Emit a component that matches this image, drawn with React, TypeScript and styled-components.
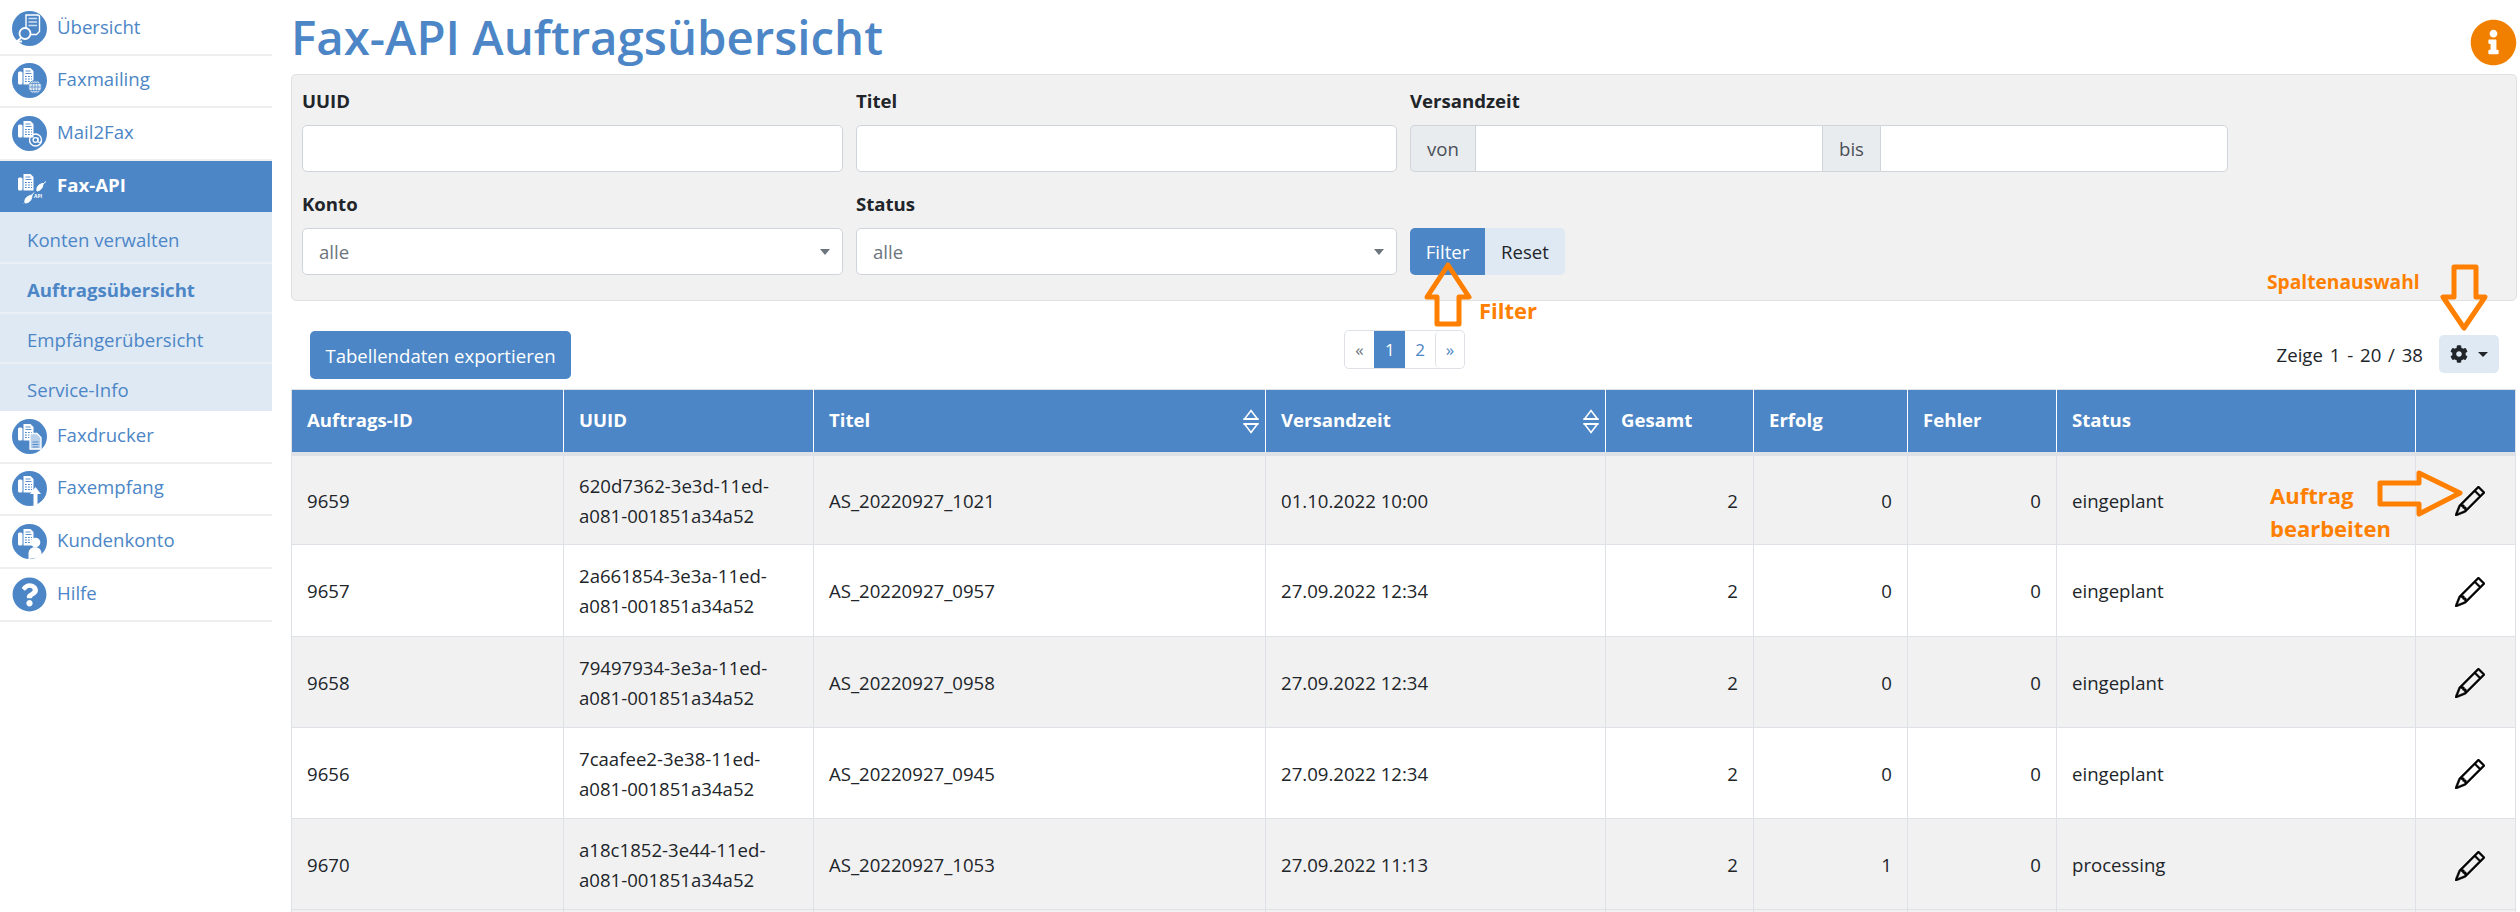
import React from 'react';
import styled, { createGlobalStyle } from 'styled-components';
import { FaCog, FaInfoCircle, FaQuestionCircle } from 'react-icons/fa';
import { BsPencil } from 'react-icons/bs';

const BLUE = '#4c86c6';
const ORANGE = '#ff8000';

const GlobalStyle = createGlobalStyle`
  html, body {
    margin: 0;
    height: 912px;
    overflow: hidden;
    background: #fff;
  }
  body {
    font-family: "Open Sans", "Noto Sans", sans-serif;
    font-size: 18.6px;
    color: #212529;
  }
  * {
    box-sizing: border-box;
  }
`;

const Page = styled.div`
  position: relative;
  display: flex;
  width: 2520px;
  height: 912px;
  overflow: hidden;
`;

const Sidebar = styled.nav`
  flex: 0 0 272px;
  padding-top: 3px;
`;

const NavItem = styled.div<{ $active?: boolean }>`
  display: flex;
  align-items: center;
  gap: 10px;
  height: ${(p) => (p.$active ? '51px' : '52.67px')};
  padding-left: 12px;
  border-bottom: ${(p) => (p.$active ? 'none' : '2px solid #eeeeee')};
  background: ${(p) => (p.$active ? BLUE : 'transparent')};
  color: ${(p) => (p.$active ? '#fff' : BLUE)};
  font-weight: ${(p) => (p.$active ? 700 : 400)};
  svg {
    flex: none;
  }
`;

const NavLabel = styled.span`
  margin-top: -4px;
`;

const SubNav = styled.div`
  padding-top: 2px;
  background: #dfe9f4;
`;

const SubItem = styled.div<{ $current?: boolean; $last?: boolean }>`
  display: flex;
  align-items: center;
  height: ${(p) => (p.$last ? '47px' : '50px')};
  padding: 4px 0 0 27px;
  border-bottom: ${(p) => (p.$last ? 'none' : '2px solid #eaeff5')};
  color: ${BLUE};
  font-weight: ${(p) => (p.$current ? 700 : 400)};
`;

const Main = styled.main`
  flex: 1;
  min-width: 0;
  padding: 0 3px 0 19px;
`;

const TitleRow = styled.header`
  display: flex;
  align-items: flex-start;
  justify-content: space-between;
  height: 74px;
`;

const Title = styled.h1`
  margin: 4px 0 0 0;
  font-size: 47.4px;
  font-weight: 600;
  line-height: 66px;
  color: ${BLUE};
`;

const InfoIcon = styled(FaInfoCircle)`
  margin-top: 19px;
  color: #f28000;
  font-size: 47px;
`;

const FilterCard = styled.section`
  display: grid;
  grid-template-columns: 541px 541px 818px;
  column-gap: 13px;
  height: 227px;
  padding: 13px 10px 0;
  background: #f1f1f2;
  border: 1px solid #e0e0e0;
  border-radius: 5px;
  align-content: start;
`;

const Field = styled.div`
  display: flex;
  flex-direction: column;
`;

const FieldLabel = styled.label`
  height: 37px;
  font-weight: 700;
  line-height: 26px;
`;

const FieldGap = styled.div`
  grid-column: 1 / -1;
  height: 19px;
`;

const TextInput = styled.input`
  flex: 1;
  width: 100%;
  min-width: 0;
  height: 47px;
  background: #fff;
  border: 1px solid #ced4da;
  border-radius: 5px;
`;

const SelectWrap = styled.div`
  position: relative;
  &::after {
    content: '';
    position: absolute;
    right: 13px;
    top: 21px;
    border-left: 5.5px solid transparent;
    border-right: 5.5px solid transparent;
    border-top: 6px solid #6c757d;
  }
`;

const Select = styled.select`
  display: block;
  width: 100%;
  height: 47px;
  padding: 0 30px 0 16px;
  appearance: none;
  background: #fff;
  border: 1px solid #ced4da;
  border-radius: 5px;
  font: inherit;
  color: #6c757d;
`;

const DateGroup = styled.div`
  display: flex;
  height: 47px;
`;

const DateAddon = styled.span<{ $width: number; $first?: boolean }>`
  flex: 0 0 ${(p) => p.$width}px;
  display: flex;
  align-items: center;
  justify-content: center;
  background: #e9ecef;
  border: 1px solid #ced4da;
  border-right: none;
  border-radius: ${(p) => (p.$first ? '5px 0 0 5px' : '0')};
  color: #495057;
`;

const DateInput = styled.input<{ $last?: boolean }>`
  flex: 1;
  min-width: 0;
  height: 47px;
  background: #fff;
  border: 1px solid #ced4da;
  border-right: ${(p) => (p.$last ? '1px solid #ced4da' : 'none')};
  border-radius: ${(p) => (p.$last ? '0 5px 5px 0' : '0')};
`;

const ButtonGroup = styled.div`
  display: flex;
  align-self: flex-end;
  height: 47px;
`;

const GroupButton = styled.button<{ $primary?: boolean; $width: number }>`
  width: ${(p) => p.$width}px;
  height: 47px;
  padding: 0;
  border: none;
  border-radius: ${(p) => (p.$primary ? '5px 0 0 5px' : '0 5px 5px 0')};
  background: ${(p) => (p.$primary ? BLUE : '#dfe9f4')};
  color: ${(p) => (p.$primary ? '#fff' : '#212529')};
  font: inherit;
`;

const Toolbar = styled.div`
  display: grid;
  grid-template-columns: 1fr auto 1fr;
  align-items: start;
  height: 88px;
  padding: 30px 18px 0 19px;
`;

const ExportButton = styled.button`
  justify-self: start;
  width: 261px;
  height: 48px;
  padding: 0;
  border: none;
  border-radius: 5px;
  background: ${BLUE};
  color: #fff;
  font: inherit;
`;

const Pagination = styled.div`
  display: flex;
  height: 39px;
  margin-top: -1px;
  border: 1px solid #dee2e6;
  border-radius: 5px;
  font-size: 17px;
`;

const PageLink = styled.span<{ $active?: boolean; $muted?: boolean; $plain?: boolean }>`
  width: ${(p) => (p.$active ? '31px' : '29.5px')};
  display: flex;
  align-items: center;
  justify-content: center;
  background: ${(p) => (p.$active ? BLUE : '#fff')};
  color: ${(p) => (p.$active ? '#fff' : p.$muted ? '#6c757d' : BLUE)};
  border-left: ${(p) => (p.$plain ? 'none' : '1px solid #dee2e6')};
  border-radius: 5px;
  ${(p) => p.$active && 'border-radius: 0; border-left: none;'}
`;

const TableInfo = styled.div`
  justify-self: end;
  display: flex;
  align-items: center;
  gap: 16px;
  height: 38px;
  margin-top: 4px;
  word-spacing: 2px;
`;

const ColumnButton = styled.button`
  display: flex;
  align-items: center;
  justify-content: center;
  gap: 10px;
  width: 60px;
  height: 38px;
  padding: 0;
  border: none;
  border-radius: 5px;
  background: #dfe9f4;
  color: #212529;
  font-size: 17px;
  &::after {
    content: '';
    border-left: 5px solid transparent;
    border-right: 5px solid transparent;
    border-top: 5px solid #212529;
  }
`;

const Table = styled.table`
  width: 2224px;
  border-collapse: collapse;
  table-layout: fixed;
  border: 1px solid #dee2e6;
`;

const HeadCell = styled.th`
  position: relative;
  height: 64px;
  padding: 0 15px 2px;
  background: ${BLUE};
  border-left: 1px solid #fff;
  border-bottom: 4px solid #dee2e6;
  color: #fff;
  font-weight: 700;
  text-align: left;
  &:first-child {
    border-left: none;
  }
`;

const SortIcon = styled.svg`
  position: absolute;
  right: 6px;
  top: 19px;
`;

const Row = styled.tr<{ $striped: boolean }>`
  background: ${(p) => (p.$striped ? '#f1f1f2' : '#fff')};
`;

const Cell = styled.td<{ $right?: boolean }>`
  height: 91.25px;
  padding: 2px 15px 0;
  border: 1px solid #dee2e6;
  line-height: 30px;
  text-align: ${(p) => (p.$right ? 'right' : 'left')};
`;

const EditCell = styled.td`
  height: 91.25px;
  padding: 0 30px 4px 0;
  border: 1px solid #dee2e6;
  text-align: right;
  color: #000;
  font-size: 30px;
  svg {
    display: inline-block;
    vertical-align: middle;
    stroke: currentColor;
    stroke-width: 0.25;
  }
`;

const Note = styled.div<{ $x: number; $y: number; $size: number }>`
  position: absolute;
  left: ${(p) => p.$x}px;
  top: ${(p) => p.$y}px;
  font-size: ${(p) => p.$size}px;
  font-weight: 700;
  line-height: 33px;
  color: ${ORANGE};
  white-space: nowrap;
`;

const Arrow = styled.svg<{ $x: number; $y: number }>`
  position: absolute;
  left: ${(p) => p.$x}px;
  top: ${(p) => p.$y}px;
  overflow: visible;
  fill: none;
  stroke: ${ORANGE};
  stroke-width: 5;
  stroke-linejoin: round;
`;

const FaxGlyph = ({ fill = '#fff', detail = BLUE }: { fill?: string; detail?: string }) => (
  <g>
    <rect x="6" y="8.5" width="4.5" height="13" rx="1.5" fill={fill} />
    <path d="M11.5 10V5h7l3 3v13.5h-10z" fill={fill} />
    <path d="M13.5 8h5M13.5 10.5h6" stroke={detail} strokeWidth="0.9" />
    <path d="M13 13.5h1.8M16 13.5h1.8M19 13.5h1M13 16h1.8M16 16h1.8M19 16h1M13 18.5h1.8M16 18.5h1.8M19 18.5h1" stroke={detail} strokeWidth="1.2" />
  </g>
);

const IconBase = styled.svg`
  width: 35px;
  height: 35px;
`;

const NavDisc = ({ children }: { children: React.ReactNode }) => (
  <IconBase viewBox="0 0 35 35">
    <circle cx="17.5" cy="17.5" r="17.5" fill={BLUE} />
    {children}
  </IconBase>
);

const OverviewIcon = () => (
  <NavDisc>
    <path d="M14 4h11.5a2 2 0 0 1 2 2v14.5l-3 3H14z" fill={BLUE} stroke="#fff" strokeWidth="1.4" />
    <path d="M16.5 7.5h8.5M16.5 11h8.5M16.5 14.5h8.5" stroke="#cfe0f2" strokeWidth="1.3" />
    <circle cx="13" cy="22.5" r="5.5" fill={BLUE} stroke="#fff" strokeWidth="1.8" />
    <path d="M9 27 L4.5 30.5 H10" stroke="#fff" strokeWidth="1.8" fill="none" />
  </NavDisc>
);

const MailingIcon = () => (
  <NavDisc>
    <FaxGlyph />
    <circle cx="23" cy="24" r="6.5" fill="#dfe9f4" stroke={BLUE} strokeWidth="0.8" />
    <path d="M16.5 24h13M23 17.5v13M18 20.5h10M18 27.5h10" stroke={BLUE} strokeWidth="0.7" />
    <ellipse cx="23" cy="24" rx="3" ry="6.5" fill="none" stroke={BLUE} strokeWidth="0.7" />
  </NavDisc>
);

const MailFaxIcon = () => (
  <NavDisc>
    <FaxGlyph />
    <circle cx="23.5" cy="24" r="6" fill="none" stroke="#fff" strokeWidth="1.4" />
    <circle cx="23.5" cy="24" r="2.4" fill="none" stroke="#fff" strokeWidth="1.3" />
    <path d="M26 21.5v3.5a1.5 1.5 0 0 0 3 0" fill="none" stroke="#fff" strokeWidth="1.2" />
  </NavDisc>
);

const ApiIcon = () => (
  <IconBase viewBox="0 0 35 35">
    <FaxGlyph />
    <path d="M25 22c-1-4 2-7 6-7.5 0 4-2 7-6 7.5zM31 15l3-2.5" fill="#fff" stroke="#fff" strokeWidth="1" />
    <path d="M13 34c-1-4 2-7 7-8 0 4-2 8-7 8zM20 26l2-2.5M11.5 35l-1.5 1" fill="#fff" stroke="#fff" strokeWidth="1" />
    <text x="22" y="29" fill="#fff" fontSize="5" fontWeight="700">API</text>
  </IconBase>
);

const PrinterIcon = () => (
  <NavDisc>
    <FaxGlyph />
    <path d="M18 14.5h7l4 4V30H18z" fill="#b9d0ea" stroke="#fff" strokeWidth="1.3" />
    <path d="M20.5 23h6M20.5 25.5h6M20.5 28h6" stroke={BLUE} strokeWidth="0.9" />
  </NavDisc>
);

const ReceiveIcon = () => (
  <NavDisc>
    <FaxGlyph />
    <path d="M23.5 16l5.5 7h-3.5v12h-4V23H18z" fill="#fff" />
  </NavDisc>
);

const AccountIcon = () => (
  <NavDisc>
    <FaxGlyph />
    <circle cx="23.5" cy="18.5" r="4.8" fill="#fff" />
    <path d="M16.5 35v-6a6.5 6 0 0 1 13 0v4z" fill="#fff" />
  </NavDisc>
);

const GearButtonIcon = styled(FaCog)`
  font-size: 18px;
`;

const HelpIcon = styled(FaQuestionCircle)`
  color: ${BLUE};
  font-size: 35px;
`;

interface Order {
  id: string;
  uuid: string;
  title: string;
  sent: string;
  ok: number;
  status: string;
}

const orders: Order[] = [
  { id: '9659', uuid: '620d7362-3e3d-11ed-', title: 'AS_20220927_1021', sent: '01.10.2022 10:00', ok: 0, status: 'eingeplant' },
  { id: '9657', uuid: '2a661854-3e3a-11ed-', title: 'AS_20220927_0957', sent: '27.09.2022 12:34', ok: 0, status: 'eingeplant' },
  { id: '9658', uuid: '79497934-3e3a-11ed-', title: 'AS_20220927_0958', sent: '27.09.2022 12:34', ok: 0, status: 'eingeplant' },
  { id: '9656', uuid: '7caafee2-3e38-11ed-', title: 'AS_20220927_0945', sent: '27.09.2022 12:34', ok: 0, status: 'eingeplant' },
  { id: '9670', uuid: 'a18c1852-3e44-11ed-', title: 'AS_20220927_1053', sent: '27.09.2022 11:13', ok: 1, status: 'processing' },
];

const columnWidths = [272, 250, 452, 340, 148, 154, 149, 359, 100];

const SortArrows = () => (
  <SortIcon width="16" height="25" viewBox="0 0 16 25">
    <path d="M8 1.5l6.5 8.5h-13z" fill="none" stroke="#fff" strokeWidth="1.6" />
    <path d="M0.5 10h15" stroke="#fff" strokeWidth="2" />
    <path d="M8 23.5l6.5-8.5h-13z" fill="none" stroke="#fff" strokeWidth="1.6" />
    <path d="M0.5 15h15" stroke="#fff" strokeWidth="2" />
  </SortIcon>
);

const App: React.FC = () => (
  <Page>
    <GlobalStyle />
    <Sidebar>
      <NavItem><OverviewIcon /><NavLabel>Übersicht</NavLabel></NavItem>
      <NavItem><MailingIcon /><NavLabel>Faxmailing</NavLabel></NavItem>
      <NavItem><MailFaxIcon /><NavLabel>Mail2Fax</NavLabel></NavItem>
      <NavItem $active><ApiIcon /><NavLabel>Fax-API</NavLabel></NavItem>
      <SubNav>
        <SubItem>Konten verwalten</SubItem>
        <SubItem $current>Auftragsübersicht</SubItem>
        <SubItem>Empfängerübersicht</SubItem>
        <SubItem $last>Service-Info</SubItem>
      </SubNav>
      <NavItem><PrinterIcon /><NavLabel>Faxdrucker</NavLabel></NavItem>
      <NavItem><ReceiveIcon /><NavLabel>Faxempfang</NavLabel></NavItem>
      <NavItem><AccountIcon /><NavLabel>Kundenkonto</NavLabel></NavItem>
      <NavItem><HelpIcon /><NavLabel>Hilfe</NavLabel></NavItem>
    </Sidebar>

    <Main>
      <TitleRow>
        <Title>Fax-API Auftragsübersicht</Title>
        <InfoIcon />
      </TitleRow>

      <FilterCard>
        <Field>
          <FieldLabel>UUID</FieldLabel>
          <TextInput />
        </Field>
        <Field>
          <FieldLabel>Titel</FieldLabel>
          <TextInput />
        </Field>
        <Field>
          <FieldLabel>Versandzeit</FieldLabel>
          <DateGroup>
            <DateAddon $first $width={65}>von</DateAddon>
            <DateInput />
            <DateAddon $width={58}>bis</DateAddon>
            <DateInput $last />
          </DateGroup>
        </Field>
        <FieldGap />
        <Field>
          <FieldLabel>Konto</FieldLabel>
          <SelectWrap>
            <Select defaultValue="alle"><option>alle</option></Select>
          </SelectWrap>
        </Field>
        <Field>
          <FieldLabel>Status</FieldLabel>
          <SelectWrap>
            <Select defaultValue="alle"><option>alle</option></Select>
          </SelectWrap>
        </Field>
        <ButtonGroup>
          <GroupButton $primary $width={75}>Filter</GroupButton>
          <GroupButton $width={80}>Reset</GroupButton>
        </ButtonGroup>
      </FilterCard>

      <Toolbar>
        <ExportButton>Tabellendaten exportieren</ExportButton>
        <Pagination>
          <PageLink $muted $plain>«</PageLink>
          <PageLink $active>1</PageLink>
          <PageLink $plain>2</PageLink>
          <PageLink>»</PageLink>
        </Pagination>
        <TableInfo>
          Zeige 1 - 20 / 38
          <ColumnButton><GearButtonIcon /></ColumnButton>
        </TableInfo>
      </Toolbar>

      <Table>
        <colgroup>
          {columnWidths.map((w, i) => <col key={i} width={w} />)}
        </colgroup>
        <thead>
          <tr>
            <HeadCell>Auftrags-ID</HeadCell>
            <HeadCell>UUID</HeadCell>
            <HeadCell>Titel<SortArrows /></HeadCell>
            <HeadCell>Versandzeit<SortArrows /></HeadCell>
            <HeadCell>Gesamt</HeadCell>
            <HeadCell>Erfolg</HeadCell>
            <HeadCell>Fehler</HeadCell>
            <HeadCell>Status</HeadCell>
            <HeadCell />
          </tr>
        </thead>
        <tbody>
          {orders.map((o, i) => (
            <Row key={o.id} $striped={i % 2 === 0}>
              <Cell>{o.id}</Cell>
              <Cell>{o.uuid}<br />a081-001851a34a52</Cell>
              <Cell>{o.title}</Cell>
              <Cell>{o.sent}</Cell>
              <Cell $right>2</Cell>
              <Cell $right>{o.ok}</Cell>
              <Cell $right>0</Cell>
              <Cell>{o.status}</Cell>
              <EditCell><BsPencil /></EditCell>
            </Row>
          ))}
          <Row $striped>
            <Cell /><Cell /><Cell /><Cell /><Cell /><Cell /><Cell /><Cell /><Cell />
          </Row>
        </tbody>
      </Table>
    </Main>

    <Arrow $x={1425} $y={263} width="46" height="63">
      <path d="M23 2L44 34H34V61H12V34H2z" />
    </Arrow>
    <Note $x={1479} $y={294} $size={22}>Filter</Note>

    <Note $x={2267} $y={265} $size={19.2}>Spaltenauswahl</Note>
    <Arrow $x={2441} $y={265} width="46" height="65">
      <path d="M13 2H35V32H44L23 63L2 32H13z" />
    </Arrow>

    <Note $x={2270} $y={479} $size={22}>Auftrag<br />bearbeiten</Note>
    <Arrow $x={2378} $y={471} width="84" height="45">
      <path d="M2 12H41V2L82 22L41 43V33H2z" />
    </Arrow>
  </Page>
);

export default App;
